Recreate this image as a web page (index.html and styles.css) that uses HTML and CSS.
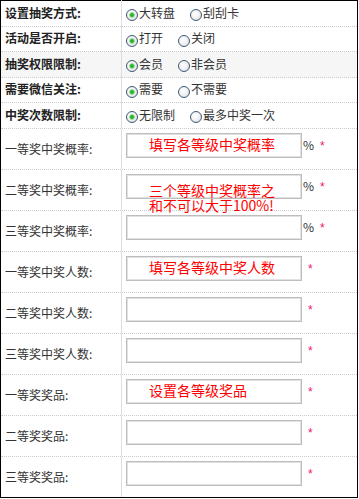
FILE: index.html
```html
<!DOCTYPE html>
<html>
<head>
<meta charset="utf-8" />
<title>抽奖设置</title>
<link rel="stylesheet" href="styles.css">
</head>
<body>
<div class="form">
    <div class="row">
        <div class="label strong">设置抽奖方式:</div>
        <div class="field radios">
            <label class="opt"><input type="radio" name="way" checked>大转盘</label>
            <label class="opt"><input type="radio" name="way">刮刮卡</label>
        </div>
    </div>
    <div class="row">
        <div class="label strong">活动是否开启:</div>
        <div class="field radios">
            <label class="opt"><input type="radio" name="open" checked>打开</label>
            <label class="opt"><input type="radio" name="open">关闭</label>
        </div>
    </div>
    <div class="row alt">
        <div class="label strong">抽奖权限限制:</div>
        <div class="field radios">
            <label class="opt"><input type="radio" name="member" checked>会员</label>
            <label class="opt"><input type="radio" name="member">非会员</label>
        </div>
    </div>
    <div class="row">
        <div class="label strong">需要微信关注:</div>
        <div class="field radios">
            <label class="opt"><input type="radio" name="wx" checked>需要</label>
            <label class="opt"><input type="radio" name="wx">不需要</label>
        </div>
    </div>
    <div class="row">
        <div class="label strong">中奖次数限制:</div>
        <div class="field radios">
            <label class="opt"><input type="radio" name="times" checked>无限制</label>
            <label class="opt"><input type="radio" name="times">最多中奖一次</label>
        </div>
    </div>

    <div class="row tall">
        <div class="label">一等奖中奖概率:</div>
        <div class="field">
            <span class="box"><input type="text" class="text"><span class="tip">填写各等级中奖概率</span></span><span class="unit">%</span><span class="req">*</span>
        </div>
    </div>
    <div class="row tall">
        <div class="label">二等奖中奖概率:</div>
        <div class="field">
            <span class="box"><input type="text" class="text"><span class="tip tip2">三个等级中奖概率之<br>和不可以大于100%!</span></span><span class="unit">%</span><span class="req">*</span>
        </div>
    </div>
    <div class="row tall">
        <div class="label">三等奖中奖概率:</div>
        <div class="field">
            <span class="box"><input type="text" class="text"></span><span class="unit">%</span><span class="req">*</span>
        </div>
    </div>
    <div class="row tall">
        <div class="label">一等奖中奖人数:</div>
        <div class="field">
            <span class="box"><input type="text" class="text"><span class="tip">填写各等级中奖人数</span></span><span class="req">*</span>
        </div>
    </div>
    <div class="row tall">
        <div class="label">二等奖中奖人数:</div>
        <div class="field">
            <span class="box"><input type="text" class="text"></span><span class="req">*</span>
        </div>
    </div>
    <div class="row tall">
        <div class="label">三等奖中奖人数:</div>
        <div class="field">
            <span class="box"><input type="text" class="text"></span><span class="req">*</span>
        </div>
    </div>
    <div class="row tall">
        <div class="label">一等奖奖品:</div>
        <div class="field">
            <span class="box"><input type="text" class="text"><span class="tip">设置各等级奖品</span></span><span class="req">*</span>
        </div>
    </div>
    <div class="row tall">
        <div class="label">二等奖奖品:</div>
        <div class="field">
            <span class="box"><input type="text" class="text"></span><span class="req">*</span>
        </div>
    </div>
    <div class="row tall">
        <div class="label">三等奖奖品:</div>
        <div class="field">
            <span class="box"><input type="text" class="text"></span><span class="req">*</span>
        </div>
    </div>
</div>
</body>
</html>
```

FILE: styles.css
```css
html * { margin:0; padding:0; }
body { font-family:"Noto Sans CJK SC", "Liberation Sans", sans-serif; font-size:12px; color:#333; background:#fff; }

.form{
	width:356px;
	border:1px solid #000;
}
.row{
	display:grid;
	grid-template-columns:121px 1fr;
	height:25.5px;
	box-sizing:border-box;
	border-bottom:1px dotted #ccc;
}
.row:last-child{ border-bottom:none; height:40px; }
.alt{ background:#f6f6f6; }
.tall{ height:41px; }

.label{
	display:flex;
	align-items:center;
	padding-left:4px;
	border-right:1px solid #ddd;
	color:#333;
	white-space:nowrap;
}
.strong{ font-weight:bold; color:#222; margin-top:-2px; }

.field{ padding-left:4px; }
.radios{
	display:flex;
	align-items:center;
	margin-top:-2px;
}
.opt{
	display:inline-flex;
	align-items:center;
	color:#333;
}
.opt + .opt{ margin-left:15px; }
.opt input{
	-webkit-appearance:none;
	appearance:none;
	width:12px;
	height:12px;
	margin:4px 1px -2px 0;
	border:1px solid #3d5a78;
	border-radius:50%;
	box-sizing:border-box;
	background:radial-gradient(circle at 40% 40%, #fff 0, #f2f2f2 45%, #cfd6dc 100%);
}
.opt input:checked{
	background:radial-gradient(circle, #1fa21f 0, #3cc03c 1.6px, #a9dca9 2.6px, transparent 3.2px),
		radial-gradient(circle at 40% 40%, #fff 0, #f2f2f2 45%, #cfd6dc 100%);
}

.tall .field{ padding-top:4px; }
.box{
	display:inline-block;
	position:relative;
}
.text{
	display:block;
	width:176px;
	height:25px;
	box-sizing:border-box;
	border:1px solid #bdbdbd;
	box-shadow:inset 0 0 0 1px #e2e2e2;
	background:#fff;
}
.tip{
	position:absolute;
	left:23px;
	top:4px;
	font-size:14px;
	line-height:15px;
	color:#f00;
	white-space:nowrap;
}
.tip2{ top:9px; }
.unit{ margin-left:1px; color:#333; }
.req{ margin-left:6px; color:#f0146e; font-family:"Liberation Sans", sans-serif; }
```
